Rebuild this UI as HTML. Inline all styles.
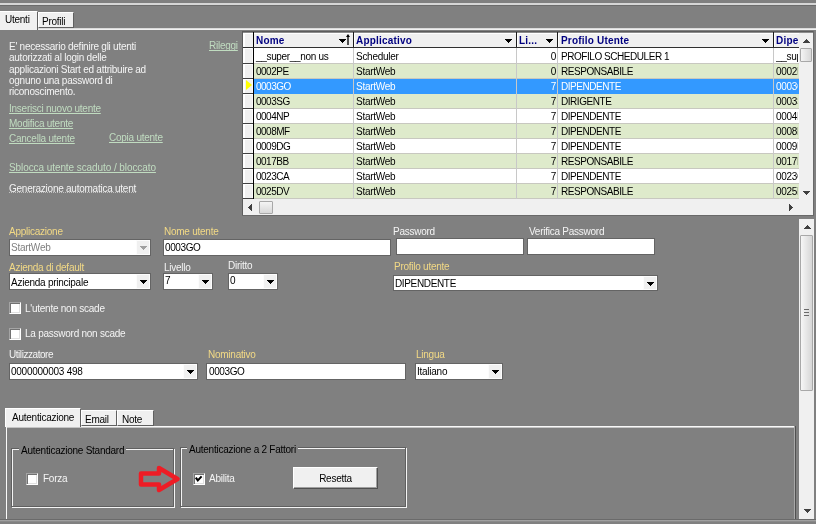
<!DOCTYPE html>
<html><head><meta charset="utf-8"><style>
*{box-sizing:border-box}
html,body{margin:0;padding:0}
body{width:816px;height:524px;overflow:hidden;background:#808080;position:relative;font-family:"Liberation Sans",sans-serif;font-size:10px;line-height:12px;letter-spacing:-0.25px}
.a{position:absolute}
.t{position:absolute;white-space:nowrap;line-height:12px;will-change:transform}
.w{color:#f4f4f4}
.y{color:#f2d985}
.lk{color:#c0dcc0;text-decoration:underline;text-decoration-skip-ink:none}
.k{color:#000}
.b{font-weight:bold;color:#000080;letter-spacing:0.2px}
</style></head><body>
<div class="a" style="left:0px;top:3px;width:816px;height:2px;background:#d6d6d6;"></div>
<div class="a" style="left:0px;top:5px;width:816px;height:1px;background:#6c6c6c;"></div>
<div class="a" style="left:0px;top:28px;width:816px;height:1px;background:#dadada;"></div>
<div class="a" style="left:0px;top:29px;width:816px;height:1px;background:#f0f0f0;"></div>
<div class="a" style="left:38px;top:12px;width:36px;height:16px;background:#f0f0f0;border-top:1px solid #fff;border-left:1px solid #fff;border-right:1px solid #606060;border-bottom:1px solid #606060"></div>
<div class="t k" style="left:42px;top:16px;">Profili</div>
<div class="a" style="left:0;top:11px;width:38px;height:19px;background:#f0f0f0;border-top:1px solid #fff;border-right:1px solid #606060"></div>
<div class="t k" style="left:5.4px;top:14px;">Utenti</div>
<div class="t w" style="left:9px;top:41px;">E' necessario definire gli utenti</div>
<div class="t w" style="left:9px;top:52px;">autorizzati al login delle</div>
<div class="t w" style="left:9px;top:64px;">applicazioni Start ed attribuire ad</div>
<div class="t w" style="left:9px;top:75px;">ognuno una password di</div>
<div class="t w" style="left:9px;top:86px;">riconoscimento.</div>
<div class="t lk" style="left:209px;top:40px;">Rileggi</div>
<div class="t lk" style="left:9px;top:103px;">Inserisci nuovo utente</div>
<div class="t lk" style="left:9px;top:118px;">Modifica utente</div>
<div class="t lk" style="left:9px;top:133px;">Cancella utente</div>
<div class="t lk" style="left:109px;top:132px;">Copia utente</div>
<div class="t lk" style="left:9px;top:162px;letter-spacing:-0.08px">Sblocca utente scaduto / bloccato</div>
<div class="t w" style="left:9px;top:183px;">Generazione automatica utent</div>
<div class="a" style="left:9px;top:192px;width:127px;height:1px;border-top:1px dotted #c0c0c0"></div>
<div class="a" style="left:242px;top:31px;width:572px;height:185px;background:#f0f0f0;"></div>
<div class="a" style="left:242px;top:31px;width:572px;height:1px;background:#5c5c5c;"></div>
<div class="a" style="left:243px;top:32px;width:570px;height:1px;background:#8c8c8c;"></div>
<div class="a" style="left:242px;top:31px;width:1px;height:185px;background:#5c5c5c;"></div>
<div class="a" style="left:813px;top:31px;width:1px;height:185px;background:#696969;"></div>
<div class="a" style="left:242px;top:215px;width:572px;height:1px;background:#696969;"></div>
<div class="a" style="left:243px;top:33px;width:556px;height:14px;background:#f0f0f0;"></div>
<div class="a" style="left:243px;top:33px;width:556px;height:1px;background:#ffffff;"></div>
<div class="a" style="left:243px;top:33px;width:2px;height:14px;background:#ffffff;"></div>
<div class="a" style="left:243px;top:47px;width:556px;height:1px;background:#303030;"></div>
<div class="a" style="left:253px;top:32px;width:1px;height:15px;background:#000000;"></div>
<div class="a" style="left:353px;top:32px;width:1px;height:15px;background:#1c1c1c;"></div>
<div class="a" style="left:354px;top:33px;width:1px;height:14px;background:#ffffff;"></div>
<div class="a" style="left:516px;top:32px;width:1px;height:15px;background:#1c1c1c;"></div>
<div class="a" style="left:517px;top:33px;width:1px;height:14px;background:#ffffff;"></div>
<div class="a" style="left:557px;top:32px;width:1px;height:15px;background:#1c1c1c;"></div>
<div class="a" style="left:558px;top:33px;width:1px;height:14px;background:#ffffff;"></div>
<div class="a" style="left:773px;top:32px;width:1px;height:15px;background:#1c1c1c;"></div>
<div class="a" style="left:774px;top:33px;width:1px;height:14px;background:#ffffff;"></div>
<div class="t b" style="left:256px;top:35px;">Nome</div>
<div class="t b" style="left:356px;top:35px;">Applicativo</div>
<div class="t b" style="left:519px;top:35px;">Li...</div>
<div class="t b" style="left:561px;top:35px;">Profilo Utente</div>
<div class="t b" style="left:776px;top:35px;">Dipe</div>
<div class="a" style="left:339px;top:39px;width:7px;height:1px;background:#000;"></div>
<div class="a" style="left:340px;top:40px;width:5px;height:1px;background:#000;"></div>
<div class="a" style="left:341px;top:41px;width:3px;height:1px;background:#000;"></div>
<div class="a" style="left:342px;top:42px;width:1px;height:1px;background:#000;"></div>
<div class="a" style="left:505px;top:39px;width:7px;height:1px;background:#000;"></div>
<div class="a" style="left:506px;top:40px;width:5px;height:1px;background:#000;"></div>
<div class="a" style="left:507px;top:41px;width:3px;height:1px;background:#000;"></div>
<div class="a" style="left:508px;top:42px;width:1px;height:1px;background:#000;"></div>
<div class="a" style="left:546px;top:39px;width:7px;height:1px;background:#000;"></div>
<div class="a" style="left:547px;top:40px;width:5px;height:1px;background:#000;"></div>
<div class="a" style="left:548px;top:41px;width:3px;height:1px;background:#000;"></div>
<div class="a" style="left:549px;top:42px;width:1px;height:1px;background:#000;"></div>
<div class="a" style="left:762px;top:39px;width:7px;height:1px;background:#000;"></div>
<div class="a" style="left:763px;top:40px;width:5px;height:1px;background:#000;"></div>
<div class="a" style="left:764px;top:41px;width:3px;height:1px;background:#000;"></div>
<div class="a" style="left:765px;top:42px;width:1px;height:1px;background:#000;"></div>
<div class="a" style="left:347px;top:37px;width:2px;height:8px;background:#505050;"></div>
<div class="a" style="left:346px;top:34px;width:0;height:0;border-left:2px solid transparent;border-right:2px solid transparent;border-bottom:3px solid #000"></div>
<div class="a" style="left:243px;top:48px;width:556px;height:151px;overflow:hidden">
<div class="a" style="left:0px;top:0px;width:10px;height:15px;background:#f0f0f0;border-left:2px solid #fff;border-top:1px solid #fff;border-right:1px solid #fafafa"></div>
<div class="a" style="left:0px;top:15px;width:10px;height:1px;background:#404040;"></div>
<div class="a" style="left:11px;top:0px;width:545px;height:15px;background:#ffffff;"></div>
<div class="a" style="left:11px;top:15px;width:545px;height:1px;background:#c8c8c0;"></div>
<div class="a" style="left:110px;top:0px;width:1px;height:16px;background:#c8c8c8;"></div>
<div class="a" style="left:273px;top:0px;width:1px;height:16px;background:#c8c8c8;"></div>
<div class="a" style="left:314px;top:0px;width:1px;height:16px;background:#c8c8c8;"></div>
<div class="a" style="left:530px;top:0px;width:1px;height:16px;background:#c8c8c8;"></div>
<div class="t" style="left:13px;top:3px;color:#000000;letter-spacing:-0.33px">__super__non us</div>
<div class="t" style="left:113px;top:3px;color:#000000;letter-spacing:-0.28px">Scheduler</div>
<div class="t" style="left:283px;top:3px;width:30px;text-align:right;color:#000000;letter-spacing:-0.25px">0</div>
<div class="t" style="left:318px;top:3px;color:#000000;letter-spacing:-0.45px">PROFILO SCHEDULER 1</div>
<div class="a" style="left:531px;top:1px;width:24px;height:14px;overflow:hidden"><div class="t" style="left:2px;top:2px;width:22px;overflow:hidden;color:#000000;letter-spacing:-0.3px">__super</div></div>
<div class="a" style="left:0px;top:16px;width:10px;height:14px;background:#f0f0f0;border-left:2px solid #fff;border-top:1px solid #fff;border-right:1px solid #fafafa"></div>
<div class="a" style="left:0px;top:30px;width:10px;height:1px;background:#404040;"></div>
<div class="a" style="left:11px;top:16px;width:545px;height:14px;background:#deeacb;"></div>
<div class="a" style="left:11px;top:30px;width:545px;height:1px;background:#c8c8c0;"></div>
<div class="a" style="left:110px;top:16px;width:1px;height:15px;background:#c8c8c8;"></div>
<div class="a" style="left:273px;top:16px;width:1px;height:15px;background:#c8c8c8;"></div>
<div class="a" style="left:314px;top:16px;width:1px;height:15px;background:#c8c8c8;"></div>
<div class="a" style="left:530px;top:16px;width:1px;height:15px;background:#c8c8c8;"></div>
<div class="t" style="left:13px;top:18px;color:#000000;letter-spacing:-0.5px">0002PE</div>
<div class="t" style="left:113px;top:18px;color:#000000;letter-spacing:-0.28px">StartWeb</div>
<div class="t" style="left:283px;top:18px;width:30px;text-align:right;color:#000000;letter-spacing:-0.25px">0</div>
<div class="t" style="left:318px;top:18px;color:#000000;letter-spacing:-0.45px">RESPONSABILE</div>
<div class="a" style="left:531px;top:16px;width:24px;height:14px;overflow:hidden"><div class="t" style="left:2px;top:2px;width:22px;overflow:hidden;color:#000000;letter-spacing:-0.3px">0002PE</div></div>
<div class="a" style="left:0px;top:31px;width:10px;height:14px;background:#f0f0f0;border-left:2px solid #fff;border-top:1px solid #fff;border-right:1px solid #fafafa"></div>
<div class="a" style="left:0px;top:45px;width:10px;height:1px;background:#404040;"></div>
<div class="a" style="left:11px;top:31px;width:545px;height:15px;background:#3399ff;"></div>
<div class="a" style="left:110px;top:31px;width:1px;height:15px;background:#c8c8c8;"></div>
<div class="a" style="left:273px;top:31px;width:1px;height:15px;background:#c8c8c8;"></div>
<div class="a" style="left:314px;top:31px;width:1px;height:15px;background:#c8c8c8;"></div>
<div class="a" style="left:530px;top:31px;width:1px;height:15px;background:#c8c8c8;"></div>
<div class="t" style="left:13px;top:33px;color:#ffffff;letter-spacing:-0.5px">0003GO</div>
<div class="t" style="left:113px;top:33px;color:#ffffff;letter-spacing:-0.28px">StartWeb</div>
<div class="t" style="left:283px;top:33px;width:30px;text-align:right;color:#ffffff;letter-spacing:-0.25px">7</div>
<div class="t" style="left:318px;top:33px;color:#ffffff;letter-spacing:-0.45px">DIPENDENTE</div>
<div class="a" style="left:531px;top:31px;width:24px;height:14px;overflow:hidden"><div class="t" style="left:2px;top:2px;width:22px;overflow:hidden;color:#ffffff;letter-spacing:-0.3px">0003GO</div></div>
<div class="a" style="left:0px;top:46px;width:10px;height:14px;background:#f0f0f0;border-left:2px solid #fff;border-top:1px solid #fff;border-right:1px solid #fafafa"></div>
<div class="a" style="left:0px;top:60px;width:10px;height:1px;background:#404040;"></div>
<div class="a" style="left:11px;top:46px;width:545px;height:14px;background:#deeacb;"></div>
<div class="a" style="left:11px;top:60px;width:545px;height:1px;background:#c8c8c0;"></div>
<div class="a" style="left:110px;top:46px;width:1px;height:15px;background:#c8c8c8;"></div>
<div class="a" style="left:273px;top:46px;width:1px;height:15px;background:#c8c8c8;"></div>
<div class="a" style="left:314px;top:46px;width:1px;height:15px;background:#c8c8c8;"></div>
<div class="a" style="left:530px;top:46px;width:1px;height:15px;background:#c8c8c8;"></div>
<div class="t" style="left:13px;top:48px;color:#000000;letter-spacing:-0.5px">0003SG</div>
<div class="t" style="left:113px;top:48px;color:#000000;letter-spacing:-0.28px">StartWeb</div>
<div class="t" style="left:283px;top:48px;width:30px;text-align:right;color:#000000;letter-spacing:-0.25px">7</div>
<div class="t" style="left:318px;top:48px;color:#000000;letter-spacing:-0.45px">DIRIGENTE</div>
<div class="a" style="left:531px;top:46px;width:24px;height:14px;overflow:hidden"><div class="t" style="left:2px;top:2px;width:22px;overflow:hidden;color:#000000;letter-spacing:-0.3px">0003SG</div></div>
<div class="a" style="left:0px;top:61px;width:10px;height:14px;background:#f0f0f0;border-left:2px solid #fff;border-top:1px solid #fff;border-right:1px solid #fafafa"></div>
<div class="a" style="left:0px;top:75px;width:10px;height:1px;background:#404040;"></div>
<div class="a" style="left:11px;top:61px;width:545px;height:14px;background:#ffffff;"></div>
<div class="a" style="left:11px;top:75px;width:545px;height:1px;background:#c8c8c0;"></div>
<div class="a" style="left:110px;top:61px;width:1px;height:15px;background:#c8c8c8;"></div>
<div class="a" style="left:273px;top:61px;width:1px;height:15px;background:#c8c8c8;"></div>
<div class="a" style="left:314px;top:61px;width:1px;height:15px;background:#c8c8c8;"></div>
<div class="a" style="left:530px;top:61px;width:1px;height:15px;background:#c8c8c8;"></div>
<div class="t" style="left:13px;top:63px;color:#000000;letter-spacing:-0.5px">0004NP</div>
<div class="t" style="left:113px;top:63px;color:#000000;letter-spacing:-0.28px">StartWeb</div>
<div class="t" style="left:283px;top:63px;width:30px;text-align:right;color:#000000;letter-spacing:-0.25px">7</div>
<div class="t" style="left:318px;top:63px;color:#000000;letter-spacing:-0.45px">DIPENDENTE</div>
<div class="a" style="left:531px;top:61px;width:24px;height:14px;overflow:hidden"><div class="t" style="left:2px;top:2px;width:22px;overflow:hidden;color:#000000;letter-spacing:-0.3px">0004NP</div></div>
<div class="a" style="left:0px;top:76px;width:10px;height:14px;background:#f0f0f0;border-left:2px solid #fff;border-top:1px solid #fff;border-right:1px solid #fafafa"></div>
<div class="a" style="left:0px;top:90px;width:10px;height:1px;background:#404040;"></div>
<div class="a" style="left:11px;top:76px;width:545px;height:14px;background:#deeacb;"></div>
<div class="a" style="left:11px;top:90px;width:545px;height:1px;background:#c8c8c0;"></div>
<div class="a" style="left:110px;top:76px;width:1px;height:15px;background:#c8c8c8;"></div>
<div class="a" style="left:273px;top:76px;width:1px;height:15px;background:#c8c8c8;"></div>
<div class="a" style="left:314px;top:76px;width:1px;height:15px;background:#c8c8c8;"></div>
<div class="a" style="left:530px;top:76px;width:1px;height:15px;background:#c8c8c8;"></div>
<div class="t" style="left:13px;top:78px;color:#000000;letter-spacing:-0.5px">0008MF</div>
<div class="t" style="left:113px;top:78px;color:#000000;letter-spacing:-0.28px">StartWeb</div>
<div class="t" style="left:283px;top:78px;width:30px;text-align:right;color:#000000;letter-spacing:-0.25px">7</div>
<div class="t" style="left:318px;top:78px;color:#000000;letter-spacing:-0.45px">DIPENDENTE</div>
<div class="a" style="left:531px;top:76px;width:24px;height:14px;overflow:hidden"><div class="t" style="left:2px;top:2px;width:22px;overflow:hidden;color:#000000;letter-spacing:-0.3px">0008MF</div></div>
<div class="a" style="left:0px;top:91px;width:10px;height:14px;background:#f0f0f0;border-left:2px solid #fff;border-top:1px solid #fff;border-right:1px solid #fafafa"></div>
<div class="a" style="left:0px;top:105px;width:10px;height:1px;background:#404040;"></div>
<div class="a" style="left:11px;top:91px;width:545px;height:14px;background:#ffffff;"></div>
<div class="a" style="left:11px;top:105px;width:545px;height:1px;background:#c8c8c0;"></div>
<div class="a" style="left:110px;top:91px;width:1px;height:15px;background:#c8c8c8;"></div>
<div class="a" style="left:273px;top:91px;width:1px;height:15px;background:#c8c8c8;"></div>
<div class="a" style="left:314px;top:91px;width:1px;height:15px;background:#c8c8c8;"></div>
<div class="a" style="left:530px;top:91px;width:1px;height:15px;background:#c8c8c8;"></div>
<div class="t" style="left:13px;top:93px;color:#000000;letter-spacing:-0.5px">0009DG</div>
<div class="t" style="left:113px;top:93px;color:#000000;letter-spacing:-0.28px">StartWeb</div>
<div class="t" style="left:283px;top:93px;width:30px;text-align:right;color:#000000;letter-spacing:-0.25px">7</div>
<div class="t" style="left:318px;top:93px;color:#000000;letter-spacing:-0.45px">DIPENDENTE</div>
<div class="a" style="left:531px;top:91px;width:24px;height:14px;overflow:hidden"><div class="t" style="left:2px;top:2px;width:22px;overflow:hidden;color:#000000;letter-spacing:-0.3px">0009DG</div></div>
<div class="a" style="left:0px;top:106px;width:10px;height:14px;background:#f0f0f0;border-left:2px solid #fff;border-top:1px solid #fff;border-right:1px solid #fafafa"></div>
<div class="a" style="left:0px;top:120px;width:10px;height:1px;background:#404040;"></div>
<div class="a" style="left:11px;top:106px;width:545px;height:14px;background:#deeacb;"></div>
<div class="a" style="left:11px;top:120px;width:545px;height:1px;background:#c8c8c0;"></div>
<div class="a" style="left:110px;top:106px;width:1px;height:15px;background:#c8c8c8;"></div>
<div class="a" style="left:273px;top:106px;width:1px;height:15px;background:#c8c8c8;"></div>
<div class="a" style="left:314px;top:106px;width:1px;height:15px;background:#c8c8c8;"></div>
<div class="a" style="left:530px;top:106px;width:1px;height:15px;background:#c8c8c8;"></div>
<div class="t" style="left:13px;top:108px;color:#000000;letter-spacing:-0.5px">0017BB</div>
<div class="t" style="left:113px;top:108px;color:#000000;letter-spacing:-0.28px">StartWeb</div>
<div class="t" style="left:283px;top:108px;width:30px;text-align:right;color:#000000;letter-spacing:-0.25px">7</div>
<div class="t" style="left:318px;top:108px;color:#000000;letter-spacing:-0.45px">RESPONSABILE</div>
<div class="a" style="left:531px;top:106px;width:24px;height:14px;overflow:hidden"><div class="t" style="left:2px;top:2px;width:22px;overflow:hidden;color:#000000;letter-spacing:-0.3px">0017BB</div></div>
<div class="a" style="left:0px;top:121px;width:10px;height:14px;background:#f0f0f0;border-left:2px solid #fff;border-top:1px solid #fff;border-right:1px solid #fafafa"></div>
<div class="a" style="left:0px;top:135px;width:10px;height:1px;background:#404040;"></div>
<div class="a" style="left:11px;top:121px;width:545px;height:14px;background:#ffffff;"></div>
<div class="a" style="left:11px;top:135px;width:545px;height:1px;background:#c8c8c0;"></div>
<div class="a" style="left:110px;top:121px;width:1px;height:15px;background:#c8c8c8;"></div>
<div class="a" style="left:273px;top:121px;width:1px;height:15px;background:#c8c8c8;"></div>
<div class="a" style="left:314px;top:121px;width:1px;height:15px;background:#c8c8c8;"></div>
<div class="a" style="left:530px;top:121px;width:1px;height:15px;background:#c8c8c8;"></div>
<div class="t" style="left:13px;top:123px;color:#000000;letter-spacing:-0.5px">0023CA</div>
<div class="t" style="left:113px;top:123px;color:#000000;letter-spacing:-0.28px">StartWeb</div>
<div class="t" style="left:283px;top:123px;width:30px;text-align:right;color:#000000;letter-spacing:-0.25px">7</div>
<div class="t" style="left:318px;top:123px;color:#000000;letter-spacing:-0.45px">DIPENDENTE</div>
<div class="a" style="left:531px;top:121px;width:24px;height:14px;overflow:hidden"><div class="t" style="left:2px;top:2px;width:22px;overflow:hidden;color:#000000;letter-spacing:-0.3px">0023CA</div></div>
<div class="a" style="left:0px;top:136px;width:10px;height:14px;background:#f0f0f0;border-left:2px solid #fff;border-top:1px solid #fff;border-right:1px solid #fafafa"></div>
<div class="a" style="left:0px;top:150px;width:10px;height:1px;background:#404040;"></div>
<div class="a" style="left:11px;top:136px;width:545px;height:14px;background:#deeacb;"></div>
<div class="a" style="left:11px;top:150px;width:545px;height:1px;background:#c8c8c0;"></div>
<div class="a" style="left:110px;top:136px;width:1px;height:15px;background:#c8c8c8;"></div>
<div class="a" style="left:273px;top:136px;width:1px;height:15px;background:#c8c8c8;"></div>
<div class="a" style="left:314px;top:136px;width:1px;height:15px;background:#c8c8c8;"></div>
<div class="a" style="left:530px;top:136px;width:1px;height:15px;background:#c8c8c8;"></div>
<div class="t" style="left:13px;top:138px;color:#000000;letter-spacing:-0.5px">0025DV</div>
<div class="t" style="left:113px;top:138px;color:#000000;letter-spacing:-0.28px">StartWeb</div>
<div class="t" style="left:283px;top:138px;width:30px;text-align:right;color:#000000;letter-spacing:-0.25px">7</div>
<div class="t" style="left:318px;top:138px;color:#000000;letter-spacing:-0.45px">RESPONSABILE</div>
<div class="a" style="left:531px;top:136px;width:24px;height:14px;overflow:hidden"><div class="t" style="left:2px;top:2px;width:22px;overflow:hidden;color:#000000;letter-spacing:-0.3px">0025DV</div></div>
<div class="a" style="left:10px;top:0px;width:1px;height:151px;background:#000000;"></div>
<div class="a" style="left:3px;top:32px;width:0;height:0;border-top:5px solid transparent;border-bottom:5px solid transparent;border-left:6px solid #ffff00"></div>
</div>
<div class="a" style="left:799px;top:33px;width:14px;height:166px;background:#f0f0f0;"></div>
<div class="a" style="left:806px;top:39px;width:1px;height:1px;background:#404040;"></div>
<div class="a" style="left:805px;top:40px;width:3px;height:1px;background:#404040;"></div>
<div class="a" style="left:804px;top:41px;width:5px;height:1px;background:#404040;"></div>
<div class="a" style="left:803px;top:42px;width:7px;height:1px;background:#404040;"></div>
<div class="a" style="left:800px;top:48px;width:12px;height:14px;background:linear-gradient(90deg,#f4f4f4,#d8d8d8);border:1px solid #a8a8a8;border-radius:1px"></div>
<div class="a" style="left:803px;top:191px;width:7px;height:1px;background:#404040;"></div>
<div class="a" style="left:804px;top:192px;width:5px;height:1px;background:#404040;"></div>
<div class="a" style="left:805px;top:193px;width:3px;height:1px;background:#404040;"></div>
<div class="a" style="left:806px;top:194px;width:1px;height:1px;background:#404040;"></div>
<div class="a" style="left:243px;top:199px;width:556px;height:16px;background:#f0f0f0;"></div>
<div class="a" style="left:248px;top:207px;width:1px;height:1px;background:#404040;"></div>
<div class="a" style="left:249px;top:206px;width:1px;height:3px;background:#404040;"></div>
<div class="a" style="left:250px;top:205px;width:1px;height:5px;background:#404040;"></div>
<div class="a" style="left:251px;top:204px;width:1px;height:7px;background:#404040;"></div>
<div class="a" style="left:259px;top:201px;width:14px;height:13px;background:linear-gradient(180deg,#f4f4f4,#d8d8d8);border:1px solid #a8a8a8;border-radius:1px"></div>
<div class="a" style="left:789px;top:204px;width:1px;height:7px;background:#404040;"></div>
<div class="a" style="left:790px;top:205px;width:1px;height:5px;background:#404040;"></div>
<div class="a" style="left:791px;top:206px;width:1px;height:3px;background:#404040;"></div>
<div class="a" style="left:792px;top:207px;width:1px;height:1px;background:#404040;"></div>
<div class="a" style="left:799px;top:199px;width:14px;height:16px;background:#f0f0f0;"></div>
<div class="t y" style="left:9px;top:226px;">Applicazione</div>
<div class="a" style="left:9px;top:239px;width:142px;height:17px;background:#fff;border:1px solid #646464"></div>
<div class="a" style="left:136px;top:240px;width:14px;height:15px;background:#f0f0f0;border:1px solid #fcfcfc"></div>
<div class="a" style="left:140px;top:246px;width:7px;height:1px;background:#a0a0a0;"></div>
<div class="a" style="left:141px;top:247px;width:5px;height:1px;background:#a0a0a0;"></div>
<div class="a" style="left:142px;top:248px;width:3px;height:1px;background:#a0a0a0;"></div>
<div class="a" style="left:143px;top:249px;width:1px;height:1px;background:#a0a0a0;"></div>
<div class="t " style="left:11px;top:242px;color:#808080">StartWeb</div>
<div class="t y" style="left:164px;top:226px;">Nome utente</div>
<div class="a" style="left:163px;top:239px;width:228px;height:17px;background:#fff;border:1px solid #646464"></div>
<div class="t k" style="left:165px;top:242px;letter-spacing:-0.4px">0003GO</div>
<div class="t w" style="left:393px;top:226px;">Password</div>
<div class="a" style="left:396px;top:238px;width:128px;height:17px;background:#fff;border:1px solid #646464"></div>
<div class="t w" style="left:528.6px;top:226px;">Verifica Password</div>
<div class="a" style="left:527px;top:238px;width:128px;height:17px;background:#fff;border:1px solid #646464"></div>
<div class="t y" style="left:9px;top:262px;">Azienda di default</div>
<div class="a" style="left:9px;top:273px;width:142px;height:17px;background:#fff;border:1px solid #646464"></div>
<div class="a" style="left:136px;top:274px;width:14px;height:15px;background:#f0f0f0;border:1px solid #fcfcfc"></div>
<div class="a" style="left:140px;top:280px;width:7px;height:1px;background:#000;"></div>
<div class="a" style="left:141px;top:281px;width:5px;height:1px;background:#000;"></div>
<div class="a" style="left:142px;top:282px;width:3px;height:1px;background:#000;"></div>
<div class="a" style="left:143px;top:283px;width:1px;height:1px;background:#000;"></div>
<div class="t k" style="left:11px;top:277px;">Azienda principale</div>
<div class="t w" style="left:164px;top:262px;">Livello</div>
<div class="a" style="left:163px;top:273px;width:50px;height:17px;background:#fff;border:1px solid #646464"></div>
<div class="a" style="left:198px;top:274px;width:14px;height:15px;background:#f0f0f0;border:1px solid #fcfcfc"></div>
<div class="a" style="left:202px;top:280px;width:7px;height:1px;background:#000;"></div>
<div class="a" style="left:203px;top:281px;width:5px;height:1px;background:#000;"></div>
<div class="a" style="left:204px;top:282px;width:3px;height:1px;background:#000;"></div>
<div class="a" style="left:205px;top:283px;width:1px;height:1px;background:#000;"></div>
<div class="t k" style="left:165px;top:275px;">7</div>
<div class="t w" style="left:228px;top:260px;">Diritto</div>
<div class="a" style="left:228px;top:273px;width:50px;height:17px;background:#fff;border:1px solid #646464"></div>
<div class="a" style="left:263px;top:274px;width:14px;height:15px;background:#f0f0f0;border:1px solid #fcfcfc"></div>
<div class="a" style="left:267px;top:280px;width:7px;height:1px;background:#000;"></div>
<div class="a" style="left:268px;top:281px;width:5px;height:1px;background:#000;"></div>
<div class="a" style="left:269px;top:282px;width:3px;height:1px;background:#000;"></div>
<div class="a" style="left:270px;top:283px;width:1px;height:1px;background:#000;"></div>
<div class="t k" style="left:230px;top:275px;">0</div>
<div class="t y" style="left:394px;top:261px;">Profilo utente</div>
<div class="a" style="left:393px;top:275px;width:265px;height:16px;background:#fff;border:1px solid #646464"></div>
<div class="a" style="left:643px;top:276px;width:14px;height:14px;background:#f0f0f0;border:1px solid #fcfcfc"></div>
<div class="a" style="left:647px;top:282px;width:7px;height:1px;background:#000;"></div>
<div class="a" style="left:648px;top:283px;width:5px;height:1px;background:#000;"></div>
<div class="a" style="left:649px;top:284px;width:3px;height:1px;background:#000;"></div>
<div class="a" style="left:650px;top:285px;width:1px;height:1px;background:#000;"></div>
<div class="t k" style="left:395px;top:278px;letter-spacing:-0.35px">DIPENDENTE</div>
<div class="a" style="left:9px;top:302px;width:12px;height:12px;background:#fff;border-top:1px solid #a4a4a4;border-left:1px solid #a4a4a4;border-right:1px solid #fff;border-bottom:1px solid #fff;box-shadow:inset 1px 1px 0 #727272, inset -1px -1px 0 #e0e0e0"></div>
<div class="t w" style="left:25px;top:303px;">L'utente non scade</div>
<div class="a" style="left:9px;top:328px;width:12px;height:12px;background:#fff;border-top:1px solid #a4a4a4;border-left:1px solid #a4a4a4;border-right:1px solid #fff;border-bottom:1px solid #fff;box-shadow:inset 1px 1px 0 #727272, inset -1px -1px 0 #e0e0e0"></div>
<div class="t w" style="left:25px;top:328px;">La password non scade</div>
<div class="t w" style="left:9px;top:349px;letter-spacing:-0.45px">Utilizzatore</div>
<div class="a" style="left:9px;top:363px;width:189px;height:17px;background:#fff;border:1px solid #646464"></div>
<div class="a" style="left:183px;top:364px;width:14px;height:15px;background:#f0f0f0;border:1px solid #fcfcfc"></div>
<div class="a" style="left:187px;top:370px;width:7px;height:1px;background:#000;"></div>
<div class="a" style="left:188px;top:371px;width:5px;height:1px;background:#000;"></div>
<div class="a" style="left:189px;top:372px;width:3px;height:1px;background:#000;"></div>
<div class="a" style="left:190px;top:373px;width:1px;height:1px;background:#000;"></div>
<div class="t k" style="left:11px;top:366px;">0000000003 498</div>
<div class="t y" style="left:208px;top:349px;">Nominativo</div>
<div class="a" style="left:206px;top:363px;width:200px;height:17px;background:#fff;border:1px solid #646464"></div>
<div class="t k" style="left:209px;top:366px;letter-spacing:-0.4px">0003GO</div>
<div class="t y" style="left:416px;top:349px;">Lingua</div>
<div class="a" style="left:415px;top:363px;width:88px;height:17px;background:#fff;border:1px solid #646464"></div>
<div class="a" style="left:488px;top:364px;width:14px;height:15px;background:#f0f0f0;border:1px solid #fcfcfc"></div>
<div class="a" style="left:492px;top:370px;width:7px;height:1px;background:#000;"></div>
<div class="a" style="left:493px;top:371px;width:5px;height:1px;background:#000;"></div>
<div class="a" style="left:494px;top:372px;width:3px;height:1px;background:#000;"></div>
<div class="a" style="left:495px;top:373px;width:1px;height:1px;background:#000;"></div>
<div class="t k" style="left:417px;top:366px;">Italiano</div>
<div class="a" style="left:6px;top:426px;width:789px;height:1px;background:#f8f8f8;"></div>
<div class="a" style="left:7px;top:427px;width:788px;height:1px;background:#c4c4c4;"></div>
<div class="a" style="left:6px;top:427px;width:1px;height:92px;background:#fafafa;"></div>
<div class="a" style="left:794px;top:426px;width:1px;height:93px;background:#a8a8a8;"></div>
<div class="a" style="left:795px;top:426px;width:1px;height:93px;background:#505050;"></div>
<div class="a" style="left:0px;top:519px;width:816px;height:1px;background:#6a6a6a;"></div>
<div class="a" style="left:0px;top:520px;width:816px;height:1px;background:#a0a0a0;"></div>
<div class="a" style="left:0px;top:521px;width:816px;height:1px;background:#8a8a8a;"></div>
<div class="a" style="left:81px;top:410px;width:36px;height:16px;background:#f0f0f0;border-top:1px solid #fff;border-left:1px solid #fff;border-right:1px solid #606060;border-bottom:1px solid #606060"></div>
<div class="t k" style="left:85px;top:414px;">Email</div>
<div class="a" style="left:117px;top:410px;width:37px;height:16px;background:#f0f0f0;border-top:1px solid #fff;border-left:1px solid #fff;border-right:1px solid #606060;border-bottom:1px solid #606060"></div>
<div class="t k" style="left:122px;top:414px;">Note</div>
<div class="a" style="left:5px;top:408px;width:76px;height:19px;background:#f0f0f0;border-top:1px solid #fff;border-left:1px solid #fff;border-right:1px solid #606060"></div>
<div class="t k" style="left:12px;top:412px;">Autenticazione</div>
<div class="a" style="left:11px;top:448px;width:163px;height:59px;border:1px solid #606060;box-shadow:inset 1px 1px 0 #f4f4f4, 1px 1px 0 #f4f4f4"></div>
<div class="a" style="left:19px;top:445px;width:107px;height:6px;background:#808080;"></div>
<div class="t k" style="left:21px;top:445px;">Autenticazione Standard</div>
<div class="a" style="left:26px;top:473px;width:12px;height:12px;background:#fff;border-top:1px solid #a4a4a4;border-left:1px solid #a4a4a4;border-right:1px solid #fff;border-bottom:1px solid #fff;box-shadow:inset 1px 1px 0 #727272, inset -1px -1px 0 #e0e0e0"></div>
<div class="t w" style="left:43px;top:473px;">Forza</div>
<div class="a" style="left:180px;top:447px;width:226px;height:60px;border:1px solid #606060;box-shadow:inset 1px 1px 0 #f4f4f4, 1px 1px 0 #f4f4f4"></div>
<div class="a" style="left:187px;top:444px;width:111px;height:6px;background:#808080;"></div>
<div class="t k" style="left:189px;top:444px;">Autenticazione a 2 Fattori</div>
<div class="a" style="left:193px;top:473px;width:12px;height:12px;background:#fff;border-top:1px solid #a4a4a4;border-left:1px solid #a4a4a4;border-right:1px solid #fff;border-bottom:1px solid #fff;box-shadow:inset 1px 1px 0 #727272, inset -1px -1px 0 #e0e0e0"></div>
<svg class="a" style="left:193px;top:473px" width="12" height="12"><path d="M2.8 4.6 L4.8 7.4 L8.6 3.4" stroke="#000" stroke-width="2" fill="none"/></svg>
<div class="t w" style="left:209px;top:473px;">Abilita</div>
<div class="a" style="left:293px;top:467px;width:85px;height:22px;background:#f0f0f0;border-top:1px solid #fff;border-left:1px solid #fff;border-right:1px solid #505050;border-bottom:1px solid #505050;box-shadow:inset -1px -1px 0 #a0a0a0"></div>
<div class="t k" style="left:293px;top:473px;width:85px;text-align:center">Resetta</div>
<svg class="a" style="left:130px;top:458px" width="60" height="42"><path d="M11 15.5 H29 V10 L47.5 21 L29 32 V26.5 H11 Z" transform="translate(0,0)" fill="none" stroke="#ee1c25" stroke-width="4.5" stroke-linejoin="round"/></svg>
<div class="a" style="left:799px;top:219px;width:15px;height:300px;background:#f0f0f0;"></div>
<div class="a" style="left:807px;top:225px;width:1px;height:1px;background:#404040;"></div>
<div class="a" style="left:806px;top:226px;width:3px;height:1px;background:#404040;"></div>
<div class="a" style="left:805px;top:227px;width:5px;height:1px;background:#404040;"></div>
<div class="a" style="left:804px;top:228px;width:7px;height:1px;background:#404040;"></div>
<div class="a" style="left:800px;top:235px;width:13px;height:156px;background:linear-gradient(90deg,#f6f6f6,#d6d6d6);border:1px solid #a8a8a8;border-radius:1px"></div>
<div class="a" style="left:804px;top:309px;width:5px;height:1px;background:#6a6a6a;"></div>
<div class="a" style="left:804px;top:312px;width:5px;height:1px;background:#6a6a6a;"></div>
<div class="a" style="left:804px;top:315px;width:5px;height:1px;background:#6a6a6a;"></div>
<div class="a" style="left:804px;top:509px;width:7px;height:1px;background:#404040;"></div>
<div class="a" style="left:805px;top:510px;width:5px;height:1px;background:#404040;"></div>
<div class="a" style="left:806px;top:511px;width:3px;height:1px;background:#404040;"></div>
<div class="a" style="left:807px;top:512px;width:1px;height:1px;background:#404040;"></div>
</body></html>
